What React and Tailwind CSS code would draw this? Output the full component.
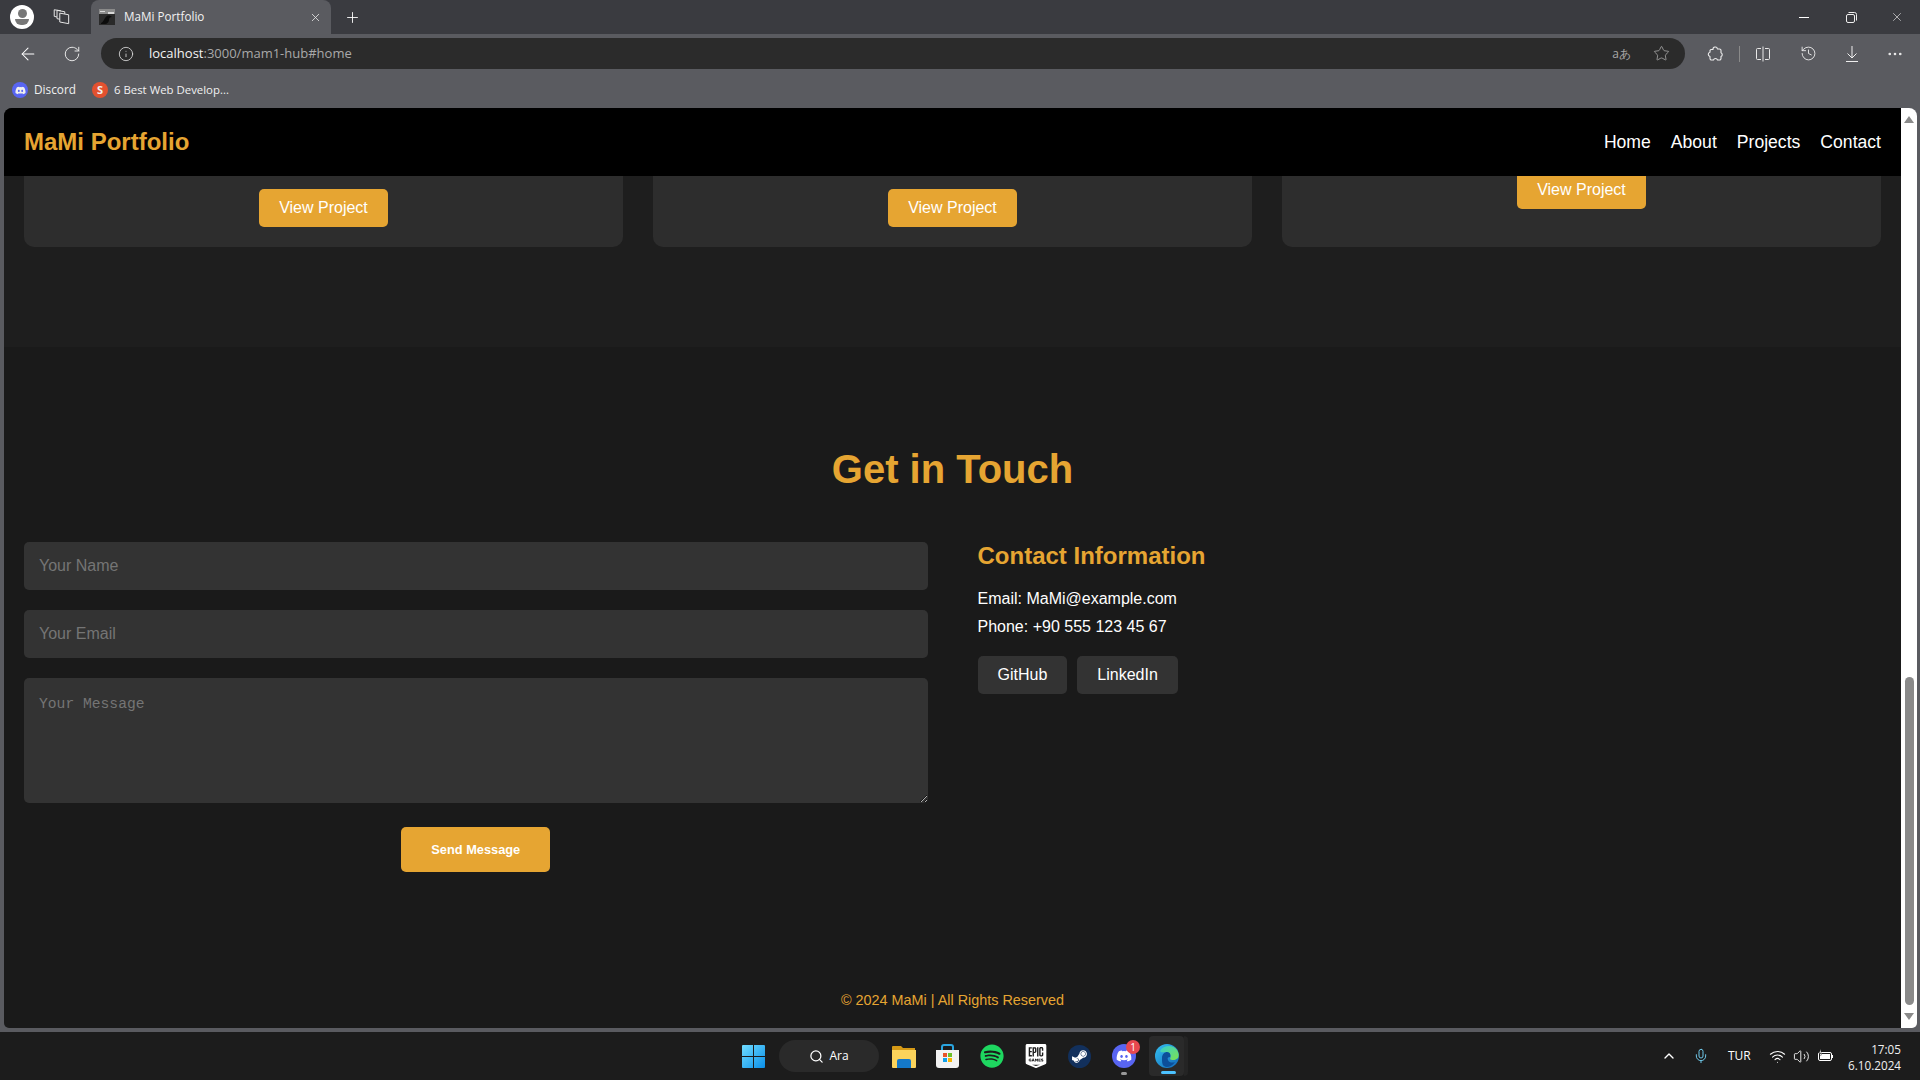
import { ArrowLeft, RotateCw, Info, Star, Plus, X, ChevronUp, Mic, Wifi, Volume2, Search, MoreHorizontal, History } from "lucide-react";
import { FaSpotify, FaSteamSymbol, FaDiscord } from "react-icons/fa";
import { SiEpicgames } from "react-icons/si";

const arial = "font-['Liberation_Sans',Arial,sans-serif]";
const ui = "font-['Open_Sans','Noto_Sans',sans-serif]";

const CollectionsIcon = () => (
  <svg width="20" height="20" viewBox="0 0 18 18" fill="none" stroke="#e5e5e5" strokeWidth="0.9">
    <path d="M7 5.500l8 1.500v8l-8-1.500z" />
    <path d="M7 11l-2.500-.5V3l7 1.300v1.900" />
    <path d="M4.500 9L2 8.400V2.500l6 .9" />
  </svg>
);

const SplitIcon = () => (
  <svg width="16" height="16" viewBox="0 0 16 16" fill="none" stroke="#e8e8e8" strokeWidth="1">
    <path d="M6 2.500H2.500a1 1 0 0 0-1 1v9a1 1 0 0 0 1 1H6M10 2.500h3.500a1 1 0 0 1 1 1v9a1 1 0 0 1-1 1H10M8 .5v15" />
  </svg>
);

const RestoreIcon = () => (
  <svg width="11" height="11" viewBox="0 0 11 11" fill="none" stroke="#eee" strokeWidth="1">
    <rect x="0.5" y="2.500" width="8" height="8" rx="1.500" />
    <path d="M2.500 .5h6a2 2 0 0 1 2 2v6" />
  </svg>
);

const ExtensionIcon = () => (
  <svg width="16" height="16" viewBox="0 0 16 16" fill="none" stroke="#eee" strokeWidth="1.100" strokeLinejoin="round">
    <path d="M6 3.500a2.200 2.200 0 0 1 4.400-.5h2.100a1.500 1.500 0 0 1 1.500 1.500v2.300a2 2 0 0 1 0 3.700v2a1.500 1.500 0 0 1-1.500 1.500h-2a2.100 2.100 0 0 0-4 0h-2a1.500 1.500 0 0 1-1.500-1.500v-2a2.200 2.200 0 0 1 0-4.300v-1.700a1.500 1.500 0 0 1 1.500-1z" />
  </svg>
);

const DownloadIcon = () => (
  <svg width="16" height="18" viewBox="0 0 16 18" fill="none" stroke="#eee" strokeWidth="1">
    <path d="M8 1v12M3.500 8.500L8 13l4.500-4.500M2 16.500h12" />
  </svg>
);

const Favicon = () => (
  <svg width="16" height="16" viewBox="0 0 16 16">
    <rect width="16" height="16" fill="#8a8a8a" />
    <rect y="5" width="16" height="11" fill="#2a2a2a" />
    <path d="M2 14c3-1 3-5 6-7 2-1 4 0 5 1-2 0-3 1-3 3s-2 4-4 4H2z" fill="#0c0c0c" />
    <path d="M9 3h6v2H9zM1 2h5v1H1z" fill="#d8d8d8" />
  </svg>
);

const WindowsLogo = () => (
  <svg width="23" height="23" viewBox="0 0 23 23">
    <defs>
      <linearGradient id="win" x1="0" y1="0" x2="1" y2="1">
        <stop offset="0" stopColor="#6fdcff" />
        <stop offset="1" stopColor="#0a8fe8" />
      </linearGradient>
    </defs>
    <path d="M1 0h10v11H0V1a1 1 0 0 1 1-1zM12 0h10a1 1 0 0 1 1 1v10H12zM0 12h11v11H1a1 1 0 0 1-1-1zM12 12h11v10a1 1 0 0 1-1 1H12z" fill="url(#win)" />
  </svg>
);

const FolderIcon = () => (
  <svg width="24" height="23" viewBox="0 0 24 23">
    <path d="M0 2a1 1 0 0 1 1-1h8l2 2h12v4H0z" fill="#d69a16" />
    <path d="M0 5h24v17a1 1 0 0 1-1 1H1a1 1 0 0 1-1-1z" fill="#fbd35b" />
    <path d="M5 16a2 2 0 0 1 2-2h10a2 2 0 0 1 2 2v7H5z" fill="#1478c8" />
  </svg>
);

const StoreIcon = () => (
  <svg width="23" height="24" viewBox="0 0 23 24">
    <path d="M6 6V3a2 2 0 0 1 2-2h7a2 2 0 0 1 2 2v3" fill="none" stroke="#2aa5e0" strokeWidth="2" />
    <path d="M0 6h23v15a3 3 0 0 1-3 3H3a3 3 0 0 1-3-3z" fill="#f2f2f2" />
    <rect x="7" y="9" width="4" height="4" fill="#e8542a" />
    <rect x="12" y="9" width="4" height="4" fill="#6cc02a" />
    <rect x="7" y="14" width="4" height="4" fill="#12a0e8" />
    <rect x="12" y="14" width="4" height="4" fill="#f8b400" />
  </svg>
);

const EdgeIcon = () => (
  <svg width="24" height="24" viewBox="0 0 24 24">
    <defs>
      <linearGradient id="edgeA" x1="0" y1="0" x2="1" y2="1">
        <stop offset="0" stopColor="#35c1f1" />
        <stop offset="1" stopColor="#1166b8" />
      </linearGradient>
      <linearGradient id="edgeB" x1="0" y1="0" x2="1" y2="1">
        <stop offset="0" stopColor="#35d0d0" />
        <stop offset="1" stopColor="#7ee04c" />
      </linearGradient>
    </defs>
    <circle cx="12" cy="12" r="12" fill="url(#edgeA)" />
    <path d="M5 7c3-6 13-7 17-1 2 3 2 6 1 8-2 2-6 3-8 1 2-3 0-7-4-7-3 0-5 1-6-1z" fill="url(#edgeB)" />
    <path d="M7 14c0-4 3-6 5-6 3 0 4 3 3 5-2 0-3 1-2 3 1 3 5 3 7 2-3 5-9 6-11 4-2-1-2-5-2-8z" fill="#0c4f9a" />
  </svg>
);

const BatteryIcon = () => (
  <svg width="16" height="14" viewBox="0 0 16 14" fill="none" stroke="#fff" strokeWidth="1">
    <rect x="0.5" y="3.500" width="13" height="8" rx="1.500" />
    <rect x="2" y="5" width="10" height="5" fill="#fff" stroke="none" />
    <path d="M14.500 6v3" />
    <path d="M3 0L1 4h3L2.500 7" fill="#fff" stroke="#1c1c1c" strokeWidth="0.5" />
  </svg>
);

const ScrollArrow = ({ down }) => (
  <div className={`w-0 h-0 border-l-[5px] border-r-[5px] border-l-transparent border-r-transparent ${down ? "border-t-[7px] border-t-[#8a8a8a]" : "border-b-[7px] border-b-[#8a8a8a]"}`} />
);

const BrowserChrome = () => (
  <div className={`${ui} text-white`}>
    {/* tab strip */}
    <div className="h-[34px] bg-[#3a3b40] flex items-center">
      <div className="w-[24px] h-[24px] ml-[10px] rounded-full bg-white flex flex-col items-center justify-center">
        <div className="w-[9px] h-[9px] rounded-full bg-[#777]" />
        <div className="w-[14px] h-[6px] mt-[1px] rounded-b-full rounded-t-[3px] bg-[#777]" />
      </div>
      <div className="ml-[18px]"><CollectionsIcon /></div>
      <div className="ml-[19px] w-[240px] h-[34px] bg-[#5a5b60] rounded-t-[8px] flex items-center pl-[7px] pr-[9px]">
        <div className="ml-[1px]"><Favicon /></div>
        <span className="ml-[9px] text-[11.7px] text-[#f2f2f2] flex-1">MaMi Portfolio</span>
        <X size={13} strokeWidth={1.5} className="text-[#e8e8e8]" />
      </div>
      <Plus size={17} strokeWidth={1.25} className="ml-[13px]" />
      <div className="ml-auto flex items-center">
        <div className="w-[10px] h-px bg-white" />
        <div className="ml-[37px]"><RestoreIcon /></div>
        <X size={14} strokeWidth={1} className="ml-[33px] mr-[16px]" />
      </div>
    </div>

    {/* toolbar */}
    <div className="h-[38px] pt-[1px] bg-[#5a5b60] flex items-center">
      <ArrowLeft size={20} strokeWidth={1.25} className="ml-[18px]" />
      <RotateCw size={18} strokeWidth={1.25} className="ml-[25px] text-[#eee]" />
      <div className="ml-[20px] w-[1584px] h-[31px] rounded-full bg-[#2b2b2b] flex items-center">
        <Info size={16} strokeWidth={1.25} className="ml-[17px] text-[#ddd]" />
        <span className="ml-[15px] text-[13px] text-[#f4f4f4]">localhost<span className="text-[#a9a9a9]">:3000/mam1-hub#home</span></span>
        <span className="ml-auto text-[12px] text-[#a8a8a8]">aあ</span>
        <Star size={17} strokeWidth={1} className="ml-[22px] mr-[15px] text-[#bbb]" />
      </div>
      <div className="ml-[22px]"><ExtensionIcon /></div>
      <div className="ml-[16px] w-px h-[16px] bg-[#8a8a8a]" />
      <div className="ml-[15px]"><SplitIcon /></div>
      <History size={17} strokeWidth={1.25} className="ml-[29px] text-[#eee]" />
      <div className="ml-[27px]"><DownloadIcon /></div>
      <MoreHorizontal size={18} strokeWidth={1.5} className="ml-[26px] text-[#eee]" />
    </div>

    {/* bookmarks */}
    <div className="h-[36px] bg-[#5a5b60] flex items-center text-[12px] text-[#f0f0f0]">
      <div className="ml-[12px] w-[16px] h-[16px] rounded-full bg-[#5865f2] flex items-center justify-center">
        <FaDiscord size={11} />
      </div>
      <span className="ml-[6px] text-[11.8px]">Discord</span>
      <div className="ml-[16px] w-[16px] h-[16px] rounded-full bg-[#e2512f] flex items-center justify-center text-[11px] font-bold">S</div>
      <span className="ml-[6px] text-[11.4px]">6 Best Web Develop...</span>
    </div>
  </div>
);

const Card = ({ buttonClass }) => (
  <div className="flex-1 h-[71px] bg-[#2d2d2d] rounded-b-[10px] flex justify-center">
    <button className={`${buttonClass} h-[38px] px-[20px] bg-[#e6a532] rounded-[5px] text-[16px] text-white`}>View Project</button>
  </div>
);

const Page = () => (
  <div className={`${arial} relative flex-1 min-w-0 flex flex-col rounded-tl-[8px] rounded-bl-[5px] overflow-hidden bg-[#1a1a1a] text-white`}>
    <nav className="relative z-10 h-[68px] shrink-0 bg-black px-[20px] flex items-center justify-between">
      <div className="text-[24px] font-bold text-[#e6a532]">MaMi Portfolio</div>
      <div className="flex gap-[20px] text-[17.6px]">
        <a>Home</a>
        <a>About</a>
        <a>Projects</a>
        <a>Contact</a>
      </div>
    </nav>

    {/* tail of the projects section, scrolled under the nav */}
    <section className="h-[171px] shrink-0 bg-[#1e1e1e] px-[20px]">
      <div className="flex gap-[30px]">
        <Card buttonClass="mt-[13px]" />
        <Card buttonClass="mt-[13px]" />
        <Card buttonClass="mt-[-5px]" />
      </div>
    </section>

    <section className="flex-1 px-[20px] pt-[96px]">
      <h2 className="text-[40px] leading-[52px] font-bold text-center text-[#e6a532]">Get in Touch</h2>
      <div className="mt-[47px] flex gap-[50px]">
        <form className="flex-1 flex flex-col items-center">
          <input placeholder="Your Name" className="w-full h-[48px] px-[15px] bg-[#333] rounded-[5px] text-[16px] placeholder:text-[#757575] outline-none" />
          <input placeholder="Your Email" className="w-full h-[48px] mt-[20px] px-[15px] bg-[#333] rounded-[5px] text-[16px] placeholder:text-[#757575] outline-none" />
          <textarea placeholder="Your Message" className="block w-full h-[125px] mt-[20px] p-[15px] bg-[#333] rounded-[5px] text-[14.67px] font-['Liberation_Mono',monospace] placeholder:text-[#757575] outline-none" />
          <button type="button" className="mt-[24px] w-[149px] h-[45px] bg-[#e6a532] rounded-[5px] text-[12.8px] font-bold text-white">Send Message</button>
        </form>
        <div className="flex-1">
          <h3 className="text-[24px] leading-[28px] font-bold text-[#e6a532]">Contact Information</h3>
          <p className="mt-[15px] text-[16px] leading-[28px]">Email: MaMi@example.com</p>
          <p className="text-[16px] leading-[28px]">Phone: +90 555 123 45 67</p>
          <div className="mt-[15px] flex gap-[10px]">
            <a className="h-[38px] px-[20px] bg-[#333] rounded-[5px] flex items-center text-[16px]">GitHub</a>
            <a className="h-[38px] px-[20px] bg-[#333] rounded-[5px] flex items-center text-[16px]">LinkedIn</a>
          </div>
        </div>
      </div>
      <footer className="mt-[118px] text-center text-[14.4px] text-[#e6a532]">© 2024 MaMi | All Rights Reserved</footer>
    </section>
  </div>
);

const Scrollbar = () => (
  <div className="w-[16px] shrink-0 bg-white rounded-tr-[8px] rounded-br-[5px] flex flex-col items-center pt-[8px] pb-[8px]">
    <ScrollArrow />
    <div className="mt-[554px] w-[9px] h-[328px] rounded-full bg-[#8a8a8a]" />
    <div className="mt-auto"><ScrollArrow down /></div>
  </div>
);

const Taskbar = () => (
  <div className={`${ui} h-[48px] bg-[#1c1c1c] flex items-center text-white relative`}>
    <div className="ml-[742px]"><WindowsLogo /></div>
    <div className="ml-[14px] w-[100px] h-[32px] rounded-full bg-[#2a2a2a] flex items-center justify-center gap-[5px] text-[12px]">
      <Search size={15} strokeWidth={2} />
      <span>Ara</span>
    </div>
    <div className="ml-[13px]"><FolderIcon /></div>
    <div className="ml-[20px]"><StoreIcon /></div>
    <div className="ml-[21px]"><FaSpotify size={24} className="text-[#1ed760]" /></div>
    <div className="ml-[20px] text-white"><SiEpicgames size={24} /></div>
    <div className="ml-[20px] w-[23px] h-[23px] rounded-full bg-[#12305c] flex items-center justify-center"><FaSteamSymbol size={17} className="text-white" /></div>
    <div className="ml-[21px] relative w-[24px] h-[24px] rounded-full bg-[#5865f2] flex items-center justify-center">
      <FaDiscord size={16} />
      <span className="absolute -top-[4px] -right-[4px] w-[14px] h-[14px] rounded-full bg-[#e8484f] text-[10px] leading-[14px] text-center">1</span>
      <span className="absolute -bottom-[7px] left-[9px] w-[6px] h-[3px] rounded-full bg-[#999]" />
    </div>
    <div className="ml-[13px] relative w-[35px] h-[40px] rounded-[4px] bg-[#2a2a2a] flex items-center justify-center">
      <EdgeIcon />
      <span className="absolute bottom-[2px] left-[12px] w-[15px] h-[3px] rounded-full bg-[#4cc2ff]" />
    </div>
    <div className="w-[4px] h-[40px] rounded-r-[4px] bg-[#242424]" />

    <ChevronUp size={16} strokeWidth={2} className="ml-[473px]" />
    <Mic size={16} strokeWidth={1.5} className="ml-[16px] text-[#6fc7e8]" />
    <span className="ml-[19px] text-[12px]">TUR</span>
    <Wifi size={17} strokeWidth={1.5} className="ml-[18px]" />
    <Volume2 size={17} strokeWidth={1.25} className="ml-[7px]" />
    <div className="ml-[8px]"><BatteryIcon /></div>
    <div className="ml-auto mr-[19px] pt-[1px] text-[11.7px] leading-[16px] text-right text-[#f0f0f0]">
      <div>17:05</div>
      <div>6.10.2024</div>
    </div>
  </div>
);

export default function App() {
  return (
    <div className="w-[1920px] h-[1080px] overflow-hidden flex flex-col bg-[#5a5b60]">
      <BrowserChrome />
      <div className="h-[920px] shrink-0 flex pl-[4px] pr-[3px]">
        <Page />
        <Scrollbar />
      </div>
      <div className="h-[4px] shrink-0" />
      <Taskbar />
    </div>
  );
}
